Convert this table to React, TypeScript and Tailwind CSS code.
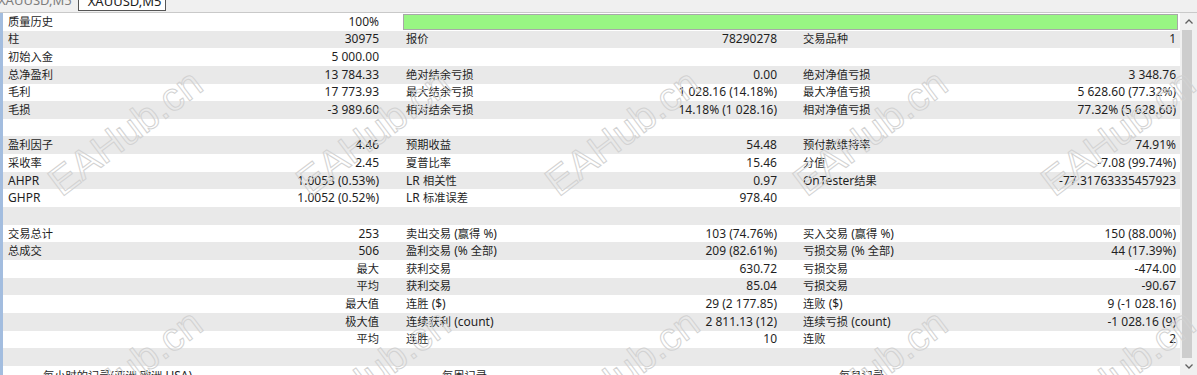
import React from "react";
import clsx from "clsx";

type RowData = [string, string, string, string, string, string];

const rows: RowData[] = [
  ["柱", "30975", "报价", "78290278", "交易品种", "1"],
  ["初始入金", "5 000.00", "", "", "", ""],
  ["总净盈利", "13 784.33", "绝对结余亏损", "0.00", "绝对净值亏损", "3 348.76"],
  ["毛利", "17 773.93", "最大结余亏损", "1 028.16 (14.18%)", "最大净值亏损", "5 628.60 (77.32%)"],
  ["毛损", "-3 989.60", "相对结余亏损", "14.18% (1 028.16)", "相对净值亏损", "77.32% (5 628.60)"],
  ["", "", "", "", "", ""],
  ["盈利因子", "4.46", "预期收益", "54.48", "预付款维持率", "74.91%"],
  ["采收率", "2.45", "夏普比率", "15.46", "分值", "-7.08 (99.74%)"],
  ["AHPR", "1.0053 (0.53%)", "LR 相关性", "0.97", "OnTester结果", "-77.31763335457923"],
  ["GHPR", "1.0052 (0.52%)", "LR 标准误差", "978.40", "", ""],
  ["", "", "", "", "", ""],
  ["交易总计", "253", "卖出交易 (赢得 %)", "103 (74.76%)", "买入交易 (赢得 %)", "150 (88.00%)"],
  ["总成交", "506", "盈利交易 (% 全部)", "209 (82.61%)", "亏损交易 (% 全部)", "44 (17.39%)"],
  ["", "最大", "获利交易", "630.72", "亏损交易", "-474.00"],
  ["", "平均", "获利交易", "85.04", "亏损交易", "-90.67"],
  ["", "最大值", "连胜 ($)", "29 (2 177.85)", "连败 ($)", "9 (-1 028.16)"],
  ["", "极大值", "连续获利 (count)", "2 811.13 (12)", "连续亏损 (count)", "-1 028.16 (9)"],
  ["", "平均", "连胜", "10", "连败", "2"],
  ["", "", "", "", "", ""],
];

// watermark spots, upper and lower band
const marks = [
  "left-[125px] top-[132px]",
  "left-[373px] top-[132px]",
  "left-[622px] top-[132px]",
  "left-[870px] top-[132px]",
  "left-[1118px] top-[132px]",
  "left-[125px] top-[372px]",
  "left-[373px] top-[372px]",
  "left-[622px] top-[372px]",
  "left-[870px] top-[372px]",
  "left-[1118px] top-[372px]",
];

// CJK runs are a touch narrower in the original font
function Txt({ s }: { s: string }) {
  const parts = s.split(/([\u3000-\u9fff\uff00-\uffef]+)/);
  return (
    <>
      {parts.map((p, i) =>
        /[\u3000-\u9fff\uff00-\uffef]/.test(p) ? (
          <span key={i} className="text-[11.25px]">{p}</span>
        ) : (
          <span key={i}>{p}</span>
        )
      )}
    </>
  );
}

function Cell({ label, value, className }: { label: string; value: string; className: string }) {
  return (
    <div className={clsx("flex items-center justify-between whitespace-nowrap", className)}>
      <span><Txt s={label} /></span>
      <span><Txt s={value} /></span>
    </div>
  );
}

function Row({ d, shade }: { d: RowData; shade: boolean }) {
  return (
    <div className={clsx("flex h-[17.65px] shrink-0 items-center", shade ? "bg-[#e9e9e9]" : "bg-white")}>
      <Cell label={d[0]} value={d[1]} className="w-[397px] pl-[5px] pr-[21px]" />
      <Cell label={d[2]} value={d[3]} className="w-[397px] pl-[6px] pr-[20px]" />
      <Cell label={d[4]} value={d[5]} className="flex-1 pl-[6px] pr-[4px]" />
    </div>
  );
}

function TabBar() {
  return (
    <div className="flex h-[13px] items-start overflow-hidden border-b border-[#c9c9c9] bg-[#f0f0f0] text-[13px] leading-[13px]">
      <div className="-ml-[2px] -mt-[6px] text-[#7d7d7d]">XAUUSD,M5</div>
      <div className="-mt-[6px] ml-[6px] h-[17px] w-[88px] border border-[#555] bg-white pl-[9px] text-[#1c1c1c]">
        XAUUSD,M5
      </div>
    </div>
  );
}

function ScrollBar() {
  return (
    <div className="flex w-[17px] flex-col bg-[#f0f0f0]">
      <div className="flex h-[17px] shrink-0 items-center justify-center">
        <svg width="8" height="5" viewBox="0 0 8 5">
          <polyline points="0.5,4.5 4,1 7.5,4.5" fill="none" stroke="#606060" strokeWidth="1.3" />
        </svg>
      </div>
      <div className="ml-[2px] w-[10px] flex-1 bg-[#cdcdcd]" />
      <div className="flex h-[17px] shrink-0 items-start justify-center pt-[6px]">
        <svg width="8" height="5" viewBox="0 0 8 5">
          <polyline points="0.5,0.5 4,4 7.5,0.5" fill="none" stroke="#606060" strokeWidth="1.3" />
        </svg>
      </div>
    </div>
  );
}

export default function App() {
  return (
    <div className="relative h-[375px] w-[1197px] overflow-hidden bg-white font-['Noto_Sans','Noto_Sans_CJK_SC',sans-serif] text-[12px] text-[#1f1f1f]">
      <TabBar />
      <div className="flex h-[362px]">
        <div className="w-[3px] bg-[#a3bddf]" />
        <div className="flex flex-1 flex-col overflow-hidden">
          {/* quality row with the green bar */}
          <div className="flex h-[17.65px] shrink-0 items-center bg-white">
            <Cell label="质量历史" value="100%" className="w-[397px] pl-[5px] pr-[21px]" />
            <div className="ml-[3px] mr-[2px] h-[16px] flex-1 border border-[#a8a8a8] bg-[#98f683]" />
          </div>
          {rows.map((d, i) => (
            <Row key={i} d={d} shade={i % 2 === 0} />
          ))}
          <div className="flex h-[20px] shrink-0 items-start bg-white pt-[1px] leading-[17px] whitespace-nowrap">
            <div className="w-[397px] pl-[40px]"><Txt s="每小时的记录(亚洲 欧洲 USA)" /></div>
            <div className="w-[397px] pl-[42px]"><Txt s="每周记录" /></div>
            <div className="flex-1 pl-[42px]"><Txt s="每月记录" /></div>
          </div>
        </div>
        <ScrollBar />
      </div>

      {marks.map((m, i) => (
        <div
          key={i}
          className={clsx(
            "pointer-events-none absolute -translate-x-1/2 -translate-y-1/2 -rotate-[37deg] whitespace-nowrap font-['Liberation_Sans',sans-serif] text-[40px] leading-none text-transparent [-webkit-text-stroke:1px_#d2d2d2]",
            m
          )}
        >
          EAHub.cn
        </div>
      ))}
    </div>
  );
}
